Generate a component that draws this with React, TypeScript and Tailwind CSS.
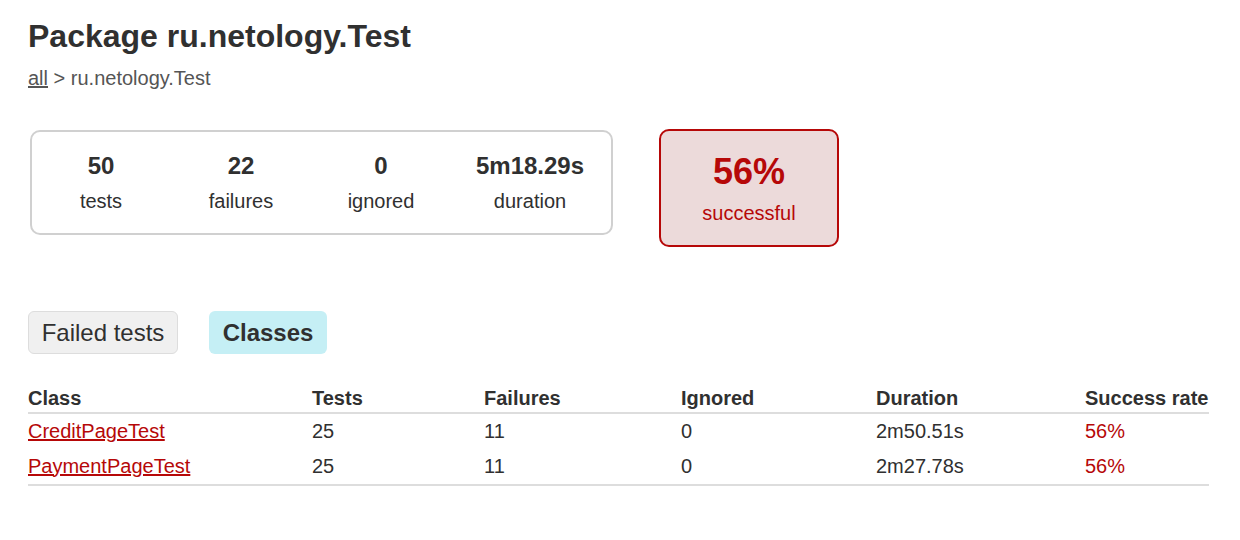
import React from 'react';

const rows = [
  { name: 'CreditPageTest', tests: 25, failures: 11, ignored: 0, duration: '2m50.51s', rate: '56%' },
  { name: 'PaymentPageTest', tests: 25, failures: 11, ignored: 0, duration: '2m27.78s', rate: '56%' },
];

const counters = [
  { value: '50', label: 'tests', w: 'w-[138px]' },
  { value: '22', label: 'failures', w: 'w-[142px]' },
  { value: '0', label: 'ignored', w: 'w-[138px]' },
  { value: '5m18.29s', label: 'duration', w: 'w-[160px]' },
];

export default function App() {
  return (
    <div className="min-h-[540px] bg-white text-[#303030] font-['Liberation_Sans',Arial,sans-serif] px-[28px] pt-[18px]">
      {/* Title */}
      <h1 className="text-[32px] font-bold leading-[36px]">Package ru.netology.Test</h1>
      <div className="mt-[12px] text-[20px] leading-[24px] text-[#555]">
        <a className="underline text-[#555]">all</a> &gt; ru.netology.Test
      </div>

      {/* Summary */}
      <div className="mt-[40px] flex items-start">
        <div className="ml-[2px] w-[583px] h-[105px] border-2 border-[#d0d0d0] rounded-[10px] flex items-center">
          {counters.map((c) => (
            <div key={c.label} className={`${c.w} text-center`}>
              <div className="text-[24px] font-bold leading-[28px]">{c.value}</div>
              <div className="mt-[9px] text-[20px] leading-[24px]">{c.label}</div>
            </div>
          ))}
        </div>
        <div className="ml-[46px] mt-[-1px] w-[180px] h-[118px] border-2 border-[#b60808] bg-[#ecdada] rounded-[10px] text-[#b60808] text-center pt-[21px]">
          <div className="text-[36px] font-bold leading-[40px]">56%</div>
          <div className="mt-[9px] text-[20px] leading-[24px]">successful</div>
        </div>
      </div>

      {/* Tabs */}
      <div className="mt-[64px] flex gap-[31px]">
        <div className="w-[150px] h-[43px] flex items-center justify-center text-[24px] bg-[#f0f0f0] border border-[#dddddd] rounded-[6px]">Failed tests</div>
        <div className="w-[118px] h-[43px] flex items-center justify-center text-[24px] font-bold bg-[#c5eff5] rounded-[6px]">Classes</div>
      </div>

      {/* Table */}
      <table className="mt-[32px] w-[1181px] text-[20px] border-collapse">
        <thead>
          <tr className="border-b-2 border-[#dddddd] text-left">
            <th className="w-[284px] font-bold leading-[24px] p-0 pb-[2px]">Class</th>
            <th className="w-[172px] font-bold leading-[24px] p-0 pb-[2px]">Tests</th>
            <th className="w-[197px] font-bold leading-[24px] p-0 pb-[2px]">Failures</th>
            <th className="w-[195px] font-bold leading-[24px] p-0 pb-[2px]">Ignored</th>
            <th className="w-[209px] font-bold leading-[24px] p-0 pb-[2px]">Duration</th>
            <th className="font-bold leading-[24px] p-0 pb-[2px]">Success rate</th>
          </tr>
        </thead>
        <tbody>
          {rows.map((r, i) => {
            const last = i === rows.length - 1;
            return (
              <tr key={r.name} className={last ? 'border-b-2 border-[#dddddd]' : ''}>
                <td className={`${last ? 'h-[37px] pb-[1px]' : 'h-[35px]'} p-0`}>
                  <a className="underline text-[#b60808]">{r.name}</a>
                </td>
                <td className="p-0">{r.tests}</td>
                <td className="p-0">{r.failures}</td>
                <td className="p-0">{r.ignored}</td>
                <td className="p-0">{r.duration}</td>
                <td className="p-0 text-[#b60808]">{r.rate}</td>
              </tr>
            );
          })}
        </tbody>
      </table>
    </div>
  );
}
